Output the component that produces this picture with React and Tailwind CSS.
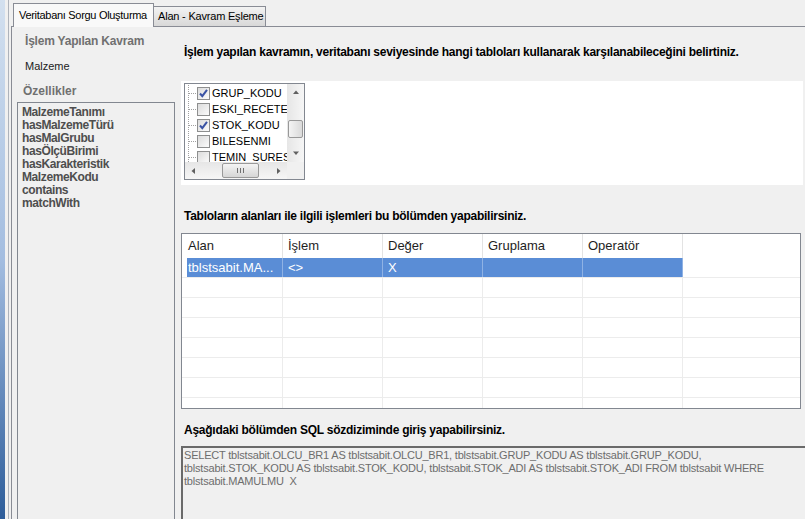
import React from 'react';

const properties = [
  'MalzemeTanımı',
  'hasMalzemeTürü',
  'hasMalGrubu',
  'hasÖlçüBirimi',
  'hasKarakteristik',
  'MalzemeKodu',
  'contains',
  'matchWith',
];

const tables = [
  { name: 'GRUP_KODU', checked: true },
  { name: 'ESKI_RECETE', checked: false },
  { name: 'STOK_KODU', checked: true },
  { name: 'BILESENMI', checked: false },
  { name: 'TEMIN_SURESI', checked: false },
];

const columns = ['İşlem', 'Değer', 'Gruplama', 'Operatör'];

const CheckBox = ({ checked }) => (
  <div className="w-[13px] h-[13px] shrink-0 border border-[#8e8f8f] bg-gradient-to-br from-[#dcdcdc] to-[#fbfbfb] flex items-center justify-center">
    {checked && (
      <svg width="11" height="11" viewBox="0 0 11 11">
        <path d="M2 5.5 L4.3 8.2 L9 1.8" fill="none" stroke="#3a53a4" strokeWidth="2" />
      </svg>
    )}
  </div>
);

const TreeRow = ({ name, checked }) => (
  <div className="flex items-center h-[16px] shrink-0">
    <svg width="12" height="16" className="shrink-0">
      <line x1="3.5" y1="0" x2="3.5" y2="16" stroke="#a0a0a0" strokeDasharray="1 1" />
      <line x1="4" y1="8.5" x2="12" y2="8.5" stroke="#a0a0a0" strokeDasharray="1 1" />
    </svg>
    <CheckBox checked={checked} />
    <span className="ml-[2px] text-[11px] leading-[14px] text-black whitespace-nowrap">{name}</span>
  </div>
);

const Arrow = ({ dir }) => {
  const d = {
    up: 'M1 5 L4 1.5 L7 5 Z',
    down: 'M1 1.5 L4 5 L7 1.5 Z',
    left: 'M5 1 L1.5 4 L5 7 Z',
    right: 'M2 1 L5.5 4 L2 7 Z',
  }[dir];
  return (
    <svg width="8" height="8" viewBox="0 0 8 8">
      <path d={d} fill="#606060" />
    </svg>
  );
};

const GridRow = ({ selected, cells = [] }) => (
  <div className="flex h-[20px] shrink-0 border-b border-[#ececec]">
    <div className="w-[5px] shrink-0" />
    <div
      className={`w-[96px] shrink-0 border-r pl-[1px] flex items-center text-[13px] whitespace-nowrap ${
        selected ? 'bg-[#5a8dd6] text-white border-[#8fb2e4]' : 'border-[#ececec]'
      }`}
    >
      {cells[0]}
    </div>
    {[1, 2, 3, 4].map((i) => (
      <div
        key={i}
        className={`w-[100px] shrink-0 border-r pl-[5px] flex items-center text-[13px] ${
          selected ? 'bg-[#5a8dd6] text-white border-[#8fb2e4]' : 'border-[#ececec]'
        }`}
      >
        {cells[i]}
      </div>
    ))}
    <div className="flex-1" />
  </div>
);

export default function App() {
  return (
    <div className="w-[805px] h-[519px] overflow-hidden bg-[#f0f0f0] flex font-['Liberation_Sans',Arial,sans-serif] text-black">
      {/* window frame */}
      <div className="w-[5px] h-full shrink-0 bg-gradient-to-b from-[#d3e0ef] via-[#a3bde0] to-[#2d5d9a]" />
      <div className="w-[3px] shrink-0" />
      <div className="w-px shrink-0 bg-[#aeb3bb]" />
      <div className="w-[2px] shrink-0" />

      {/* tab control */}
      <div className="flex-1 flex flex-col min-w-0">
        <div className="flex items-end h-[26px] shrink-0 pl-[2px]">
          <div className="relative z-10 -mb-px w-[141px] h-[24px] border border-b-0 border-[#898c95] bg-[#f9f9f9] pl-[5px] flex items-center text-[11px] tracking-[-0.3px] whitespace-nowrap">
            Veritabanı Sorgu Oluşturma
          </div>
          <div className="w-[112px] h-[20px] border border-l-0 border-b-0 border-[#898c95] bg-gradient-to-b from-[#f3f3f3] to-[#d8d8d8] pl-[4px] flex items-center text-[11px] tracking-[-0.2px] whitespace-nowrap">
            Alan - Kavram Eşleme
          </div>
        </div>

        <div className="flex-1 flex border-t border-l border-[#898c95] min-h-0">
          {/* left column */}
          <div className="w-[158px] ml-[5px] shrink-0 flex flex-col">
            <div className="pt-[7px] pl-[8px] text-[12px] leading-[14px] font-bold text-[#707070] whitespace-nowrap tracking-[-0.2px]">
              İşlem Yapılan Kavram
            </div>
            <div className="mt-[12px] pl-[8px] text-[11px] leading-[13px] text-[#222]">Malzeme</div>
            <div className="mt-[11px] pl-[6px] text-[12px] leading-[14px] font-bold text-[#707070]">Özellikler</div>
            <div className="mt-[4px] flex-1 border border-b-0 border-[#828790] pt-[3px] pl-[4px]">
              {properties.map((p) => (
                <div key={p} className="text-[12px] leading-[13px] font-bold text-[#4e4e4e] tracking-[-0.4px] whitespace-nowrap">
                  {p}
                </div>
              ))}
            </div>
          </div>

          {/* right column */}
          <div className="ml-[6px] flex-1 flex flex-col min-w-0">
            <div className="mt-[18px] pl-[3px] text-[12px] leading-[14px] font-bold whitespace-nowrap tracking-[-0.25px]">
              İşlem yapılan kavramın, veritabanı seviyesinde hangi tabloları kullanarak karşılanabileceğini belirtiniz.
            </div>

            <div className="mt-[22px] w-[622px] h-[104px] shrink-0 bg-white pt-[2px] pl-[3px]">
              <div className="w-[121px] h-[97px] border border-[#828790] bg-white flex flex-col">
                <div className="flex flex-1 min-h-0">
                  <div className="flex-1 min-w-0 overflow-hidden flex flex-col pt-[1px]">
                    {tables.map((t) => (
                      <TreeRow key={t.name} {...t} />
                    ))}
                  </div>
                  <div className="w-[17px] shrink-0 flex flex-col bg-gradient-to-r from-[#e6e6e6] to-[#f6f6f6]">
                    <div className="h-[17px] flex items-center justify-center">
                      <Arrow dir="up" />
                    </div>
                    <div className="h-[19px]" />
                    <div className="h-[18px] mx-[1px] rounded-[2px] border border-[#999] bg-gradient-to-r from-[#f4f4f4] to-[#dadada]" />
                    <div className="flex-1" />
                    <div className="h-[17px] flex items-center justify-center">
                      <Arrow dir="down" />
                    </div>
                  </div>
                </div>
                <div className="flex h-[17px] shrink-0">
                  <div className="flex-1 flex items-center bg-gradient-to-b from-[#e6e6e6] to-[#f6f6f6]">
                    <div className="w-[17px] flex items-center justify-center">
                      <Arrow dir="left" />
                    </div>
                    <div className="w-[20px]" />
                    <div className="w-[37px] h-[15px] rounded-[2px] border border-[#999] bg-gradient-to-b from-[#f4f4f4] to-[#d6d6d6] flex items-center justify-center">
                      <svg width="7" height="5">
                        <rect x="0" y="0" width="1" height="5" fill="#707070" />
                        <rect x="3" y="0" width="1" height="5" fill="#707070" />
                        <rect x="6" y="0" width="1" height="5" fill="#707070" />
                      </svg>
                    </div>
                    <div className="flex-1" />
                    <div className="w-[17px] flex items-center justify-center">
                      <Arrow dir="right" />
                    </div>
                  </div>
                  <div className="w-[17px] bg-[#f0f0f0]" />
                </div>
              </div>
            </div>

            <div className="mt-[24px] pl-[3px] text-[12px] leading-[14px] font-bold whitespace-nowrap tracking-[-0.25px]">
              Tabloların alanları ile ilgili işlemleri bu bölümden yapabilirsiniz.
            </div>

            <div className="mt-[10px] w-[620px] h-[176px] shrink-0 border border-[#828790] bg-white overflow-hidden flex flex-col">
              <div className="flex h-[24px] shrink-0 text-[13px] text-[#1e1e1e]">
                <div className="w-[101px] shrink-0 border-r border-[#e3e3e3] pl-[6px] flex items-center">Alan</div>
                {columns.map((c) => (
                  <div key={c} className="w-[100px] shrink-0 border-r border-[#e3e3e3] pl-[5px] flex items-center">
                    {c}
                  </div>
                ))}
                <div className="flex-1" />
              </div>
              <GridRow selected cells={['tblstsabit.MA...', '<>', 'X', '', '']} />
              {Array.from({ length: 7 }).map((_, i) => (
                <GridRow key={i} />
              ))}
            </div>

            <div className="mt-[14px] pl-[3px] text-[12px] leading-[14px] font-bold whitespace-nowrap tracking-[-0.25px]">
              Aşağıdaki bölümden SQL sözdiziminde giriş yapabilirsiniz.
            </div>

            <div className="mt-[9px] w-[640px] flex-1 border-t-2 border-l-2 border-t-[#6a6a6a] border-l-[#6a6a6a] pt-[1px] pl-[1px] text-[11px] leading-[13px] text-[#6d6d6d] tracking-[-0.2px]">
              <div className="w-[600px]">
                SELECT tblstsabit.OLCU_BR1 AS tblstsabit.OLCU_BR1, tblstsabit.GRUP_KODU AS tblstsabit.GRUP_KODU,
                tblstsabit.STOK_KODU AS tblstsabit.STOK_KODU, tblstsabit.STOK_ADI AS tblstsabit.STOK_ADI FROM tblstsabit WHERE
                tblstsabit.MAMULMU&nbsp;&nbsp;X
              </div>
            </div>
          </div>
        </div>
      </div>
    </div>
  );
}
